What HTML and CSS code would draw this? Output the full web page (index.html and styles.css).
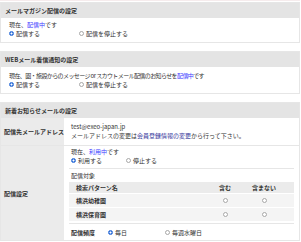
FILE: index.html
```html
<!DOCTYPE html>
<html lang="ja">
<head>
<meta charset="utf-8">
<link rel="stylesheet" href="styles.css">
</head>
<body>
<div class="page">
  <section class="box">
    <h2 class="head">メールマガジン配信の設定</h2>
    <div class="body">
      <p class="line">現在、<span class="status">配信中</span>です</p>
      <div class="radios">
        <label class="opt"><span class="radio on"></span>配信する</label>
        <label class="opt"><span class="radio"></span>配信を停止する</label>
      </div>
    </div>
  </section>

  <section class="box">
    <h2 class="head">WEBメール着信通知の設定</h2>
    <div class="body body2">
      <p class="line tight">現在、園・施設からのメッセージ or スカウトメール配信のお知らせを<span class="status">配信中</span>です</p>
      <div class="radios">
        <label class="opt"><span class="radio on"></span>配信する</label>
        <label class="opt"><span class="radio"></span>配信を停止する</label>
      </div>
    </div>
  </section>

  <section class="box last">
    <h2 class="head">新着お知らせメールの設定</h2>
    <div class="row">
      <div class="label">配信先メールアドレス</div>
      <div class="value addr">
        <p class="line">test@exeo-japan.jp</p>
        <p class="line">メールアドレスの変更は<a class="link">会員登録情報の変更</a>から行って下さい。</p>
      </div>
    </div>
    <div class="row">
      <div class="label">配信設定</div>
      <div class="value settings">
        <div class="block">
          <p class="line">現在、<span class="status">利用中</span>です</p>
          <div class="radios">
            <label class="opt"><span class="radio on"></span>利用する</label>
            <label class="opt"><span class="radio"></span>停止する</label>
          </div>
        </div>
        <div class="block target">
          <p class="line sub">配信対象</p>
          <div class="grid">
            <div class="grow ghead">
              <div class="name">検索パターン名</div>
              <div class="c">含む</div>
              <div class="c">含まない</div>
            </div>
            <div class="grow">
              <div class="name">横浜幼稚園</div>
              <div class="c"><span class="radio"></span></div>
              <div class="c"><span class="radio"></span></div>
            </div>
            <div class="grow">
              <div class="name">横浜保育園</div>
              <div class="c"><span class="radio"></span></div>
              <div class="c"><span class="radio"></span></div>
            </div>
          </div>
        </div>
        <div class="freq">
          <span class="flabel">配信頻度</span>
          <label class="opt"><span class="radio on"></span>毎日</label>
          <label class="opt"><span class="radio"></span>毎週水曜日</label>
        </div>
      </div>
    </div>
  </section>
</div>
</body>
</html>
```

FILE: styles.css
```css
html, body {
  margin: 0;
  padding: 0;
  background: #ffffff;
}
body {
  font-family: "Noto Sans CJK JP", "Noto Sans", sans-serif;
  font-size: 6px;
  color: #333333;
}
.page {
  width: 300px;
  padding-top: 1px;
  border-top: 1px solid #f6eced;
}
.box {
  border: 1px solid #e6e6e6;
  margin: 0 0 8px 0;
}
.box.last {
  margin-bottom: 0;
}
.head {
  margin: 0;
  background: #e4e4e4;
  height: 15px;
  line-height: 15px;
  padding-left: 4px;
  font-size: 6px;
  font-weight: bold;
  color: #333333;
}
.body {
  padding: 2px 0 4px 8px;
}
.body2 {
  padding-top: 4px;
}
.line {
  margin: 0;
  line-height: 9px;
  white-space: nowrap;
}
.tight {
  letter-spacing: -0.6px;
}
.status {
  color: #3b3bff;
}
.link {
  color: #33339a;
}
.radios {
  display: flex;
  line-height: 9px;
}
.radios .opt {
  width: 70px;
}
.opt {
  display: flex;
  align-items: center;
}
.radio {
  display: inline-block;
  box-sizing: border-box;
  width: 5px;
  height: 5px;
  border-radius: 50%;
  border: 1px solid #a8a8a8;
  background: #ffffff;
  margin-right: 2px;
  flex: none;
}
.radio.on {
  border-color: #2f6fd8;
  background: radial-gradient(circle, #ffffff 0 0.8px, #2f6fd8 1.2px);
}
.row {
  display: flex;
  border-top: 1px solid #e6e6e6;
}
.head + .row {
  border-top: none;
}
.label {
  width: 63px;
  flex: none;
  background: #ebebeb;
  display: flex;
  align-items: center;
  padding-left: 3px;
  box-sizing: border-box;
  font-weight: bold;
  white-space: nowrap;
}
.value {
  flex: 1;
  min-width: 0;
}
.addr {
  padding: 4px 0 5px 7px;
}
.settings {
  padding: 0 5px 0 5px;
}
.block {
  padding: 1px 0 3px 2px;
  border-bottom: 1px solid #e6e6e6;
}
.settings .radios .opt {
  width: 55px;
}
.target {
  padding: 3px 0 2px 0;
}
.sub {
  padding-left: 2px;
  line-height: 8px;
}
.grid {
  display: flex;
  flex-direction: column;
  gap: 1px;
  margin-top: 2px;
}
.grow {
  display: grid;
  grid-template-columns: 1fr 38px 40px;
  padding-right: 10px;
  background: #f4f4f4;
  height: 13px;
  line-height: 13px;
  font-weight: bold;
}
.grow.ghead {
  background: #ebebeb;
  height: 11px;
  line-height: 11px;
}
.name {
  padding-left: 7px;
}
.c {
  display: flex;
  align-items: center;
  justify-content: center;
}
.c .radio {
  margin-right: 0;
}
.freq {
  display: flex;
  align-items: center;
  height: 16px;
  padding-left: 2px;
}
.flabel {
  font-weight: bold;
  width: 37px;
}
.freq .opt {
  width: 57px;
}
```
